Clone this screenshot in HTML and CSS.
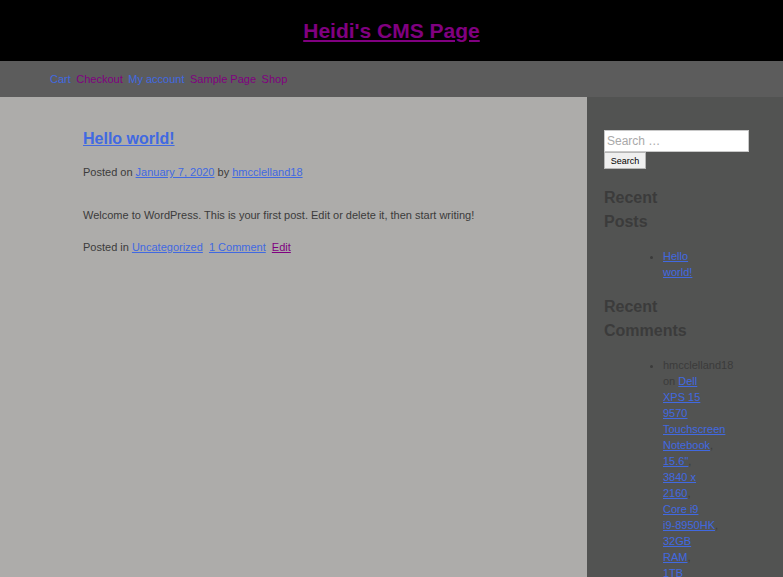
FILE: index.html
```html
<!DOCTYPE html>
<html lang="en">
<head>
<meta charset="utf-8">
<title>Heidi's CMS Page</title>
<link rel="stylesheet" href="styles.css">
</head>
<body>
<header class="site-header">
  <h1 class="site-title"><a href="#" class="visited">Heidi's CMS Page</a></h1>
</header>
<nav class="main-nav">
  <a href="#" class="link">Cart</a>
  <a href="#" class="visited">Checkout</a>
  <a href="#" class="link">My account</a>
  <a href="#" class="visited">Sample Page</a>
  <a href="#" class="visited">Shop</a>
</nav>
<div class="page">
  <main class="content">
    <article class="post">
      <h2 class="post-title"><a href="#" class="link">Hello world!</a></h2>
      <div class="post-meta">Posted on <a href="#" class="link">January 7, 2020</a> by <a href="#" class="link">hmcclelland18</a></div>
      <p class="post-body">Welcome to WordPress. This is your first post. Edit or delete it, then start writing!</p>
      <div class="post-footer">Posted in <a href="#" class="link">Uncategorized</a> <a href="#" class="link sep">1 Comment</a> <a href="#" class="visited sep">Edit</a></div>
    </article>
  </main>
  <aside class="sidebar">
    <form class="search-form">
      <input class="search-field" type="search" placeholder="Search …">
      <button class="search-submit" type="button">Search</button>
    </form>
    <section class="widget">
      <h3 class="widget-title">Recent Posts</h3>
      <ul class="widget-list">
        <li><a href="#" class="link">Hello world!</a></li>
      </ul>
    </section>
    <section class="widget">
      <h3 class="widget-title">Recent Comments</h3>
      <ul class="widget-list comments">
        <li>hmcclelland18 on <a href="#" class="link">Dell XPS 15 9570 Touchscreen Notebook</a>, <a href="#" class="link">15.6"</a>, <a href="#" class="link">3840 x 2160</a>, <a href="#" class="link">Core i9 <span class="nowrap">i9-8950HK</span></a>, <a href="#" class="link">32GB RAM</a>, <a href="#" class="link">1TB SSD</a></li>
      </ul>
    </section>
  </aside>
</div>
</body>
</html>
```

FILE: styles.css
```css
html, body {
  margin: 0;
  padding: 0;
}
body {
  font-family: "Liberation Sans", Arial, sans-serif;
  font-size: 11px;
  color: #3b3b3b;
  background: #adacaa;
}
.link { color: #4169e1; }
.visited { color: #800080; }
.nowrap { white-space: nowrap; }

.site-header {
  background: #000;
  height: 61px;
  display: flex;
  align-items: center;
  justify-content: center;
}
.site-title {
  margin: 0;
  font-size: 21px;
  font-weight: bold;
  line-height: 24px;
}

.main-nav {
  background: #5c5c5c;
  height: 36px;
  display: flex;
  align-items: center;
  gap: 5.5px;
  padding-left: 50px;
  font-size: 11px;
}
.main-nav a {
  text-decoration: none;
}

.page {
  display: flex;
  min-height: calc(100vh - 97px);
}
.content {
  flex: 0 0 587px;
  background: #adacaa;
}
.post {
  padding: 32px 0 0 83px;
}
.post-title {
  margin: 0;
  font-size: 16px;
  line-height: 20px;
  font-weight: bold;
}
.post-meta {
  margin-top: 15px;
  line-height: 16px;
}
.post-body {
  margin: 27px 0 0;
  line-height: 16px;
}
.post-footer {
  margin-top: 16px;
  line-height: 16px;
}
.post-footer .sep {
  margin-left: 3px;
}

.sidebar {
  flex: 1;
  background: #525352;
  padding: 33px 0 0 17px;
}
.search-form {
  display: flex;
  flex-direction: column;
  align-items: flex-start;
}
.search-field {
  box-sizing: border-box;
  width: 145px;
  height: 22px;
  margin: 0;
  padding: 0 2px;
  border: 1px solid #c8c8c8;
  background: #fff;
  font-family: "Liberation Sans", Arial, sans-serif;
  font-size: 12px;
  color: #333;
  -webkit-appearance: none;
  appearance: none;
}
.search-field::placeholder {
  color: #a9a9a9;
}
.search-submit {
  box-sizing: border-box;
  width: 42px;
  height: 17px;
  margin: 0;
  padding: 0;
  border: 1px solid #b5b5b5;
  background: #efefef;
  font-family: "Liberation Sans", Arial, sans-serif;
  font-size: 9px;
  color: #000;
}
.widget:first-of-type {
  margin-top: 17px;
}
.widget-title {
  margin: 0;
  width: 96px;
  font-size: 16px;
  line-height: 24px;
  font-weight: bold;
  color: #3b3b3b;
}
.widget-list {
  width: 42px;
  margin: 14px 0 15px;
  padding-left: 59px;
  font-size: 11px;
  line-height: 16px;
  color: #3b3b3b;
}
.widget-list.comments {
  margin-top: 14px;
}
```
